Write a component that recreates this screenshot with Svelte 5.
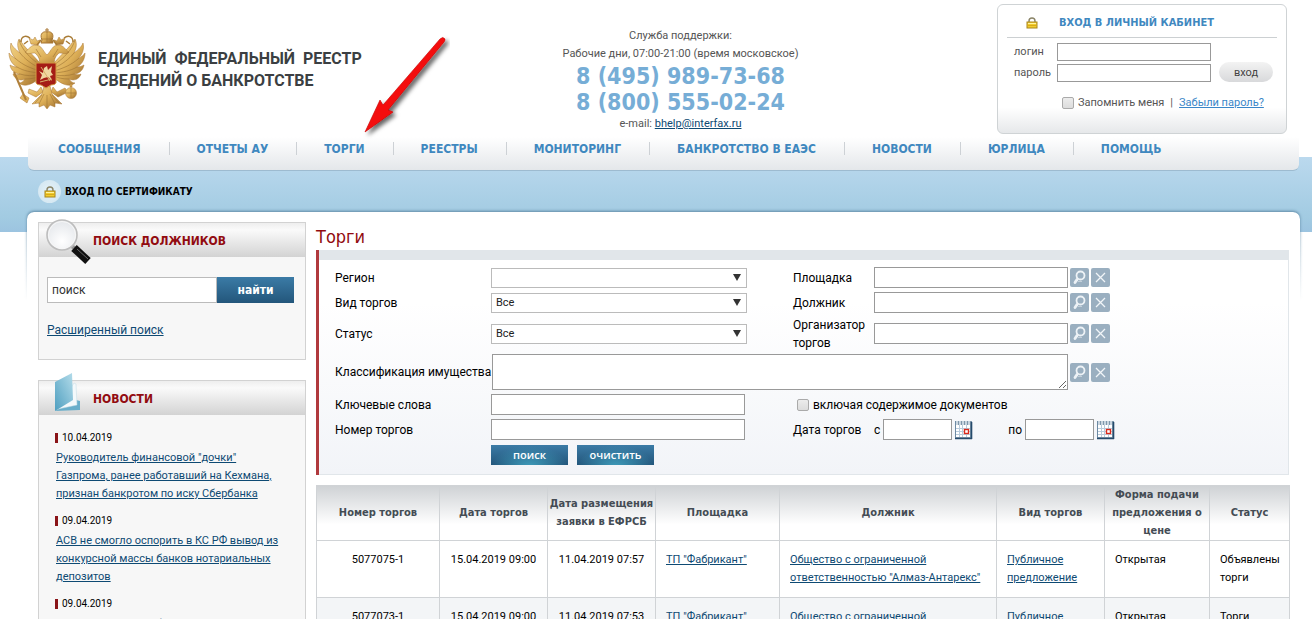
<script lang="ts">
  type Trade = {
    number: string;
    date: string;
    published: string;
    platform: string;
    debtor: string;
    kind: string;
    form: string;
    status: string;
  };

  const menu = [
    'СООБЩЕНИЯ', 'ОТЧЕТЫ АУ', 'ТОРГИ', 'РЕЕСТРЫ', 'МОНИТОРИНГ',
    'БАНКРОТСТВО В ЕАЭС', 'НОВОСТИ', 'ЮРЛИЦА', 'ПОМОЩЬ'
  ];

  const news = [
    { date: '10.04.2019', title: 'Руководитель финансовой "дочки" Газпрома, ранее работавший на Кехмана, признан банкротом по иску Сбербанка' },
    { date: '09.04.2019', title: 'АСВ не смогло оспорить в КС РФ вывод из конкурсной массы банков нотариальных депозитов' },
    { date: '09.04.2019', title: 'Реестр должников банка' }
  ];

  const trades: Trade[] = [
    {
      number: '5077075-1', date: '15.04.2019 09:00', published: '11.04.2019 07:57', platform: 'ТП "Фабрикант"',
      debtor: 'Общество с ограниченной ответственностью "Алмаз-Антарекс"', kind: 'Публичное предложение',
      form: 'Открытая', status: 'Объявлены торги'
    },
    {
      number: '5077073-1', date: '15.04.2019 09:00', published: '11.04.2019 07:53', platform: 'ТП "Фабрикант"',
      debtor: 'Общество с ограниченной ответственностью "Алмаз-Антарекс"', kind: 'Публичное предложение',
      form: 'Открытая', status: 'Торги объявлены'
    }
  ];

  let query = $state('поиск');
  let remember = $state(false);
  let withDocs = $state(false);
</script>

{#snippet lock()}
  <svg class="lock" viewBox="0 0 12 12" aria-hidden="true">
    <path d="M3 6V4a3 3 0 0 1 6 0V6" fill="none" stroke="#8a8468" stroke-width="1.400" />
    <rect x="1" y="5" width="10" height="6" fill="#f2cd2c" stroke="#a8841c" />
    <path d="M2 6.500h8" stroke="#fff3a0" />
    <path d="M2 8.500h8" stroke="#d9a91a" />
  </svg>
{/snippet}

{#snippet pick(name: string)}
  <span class="tools">
    <button type="button" class="tool" aria-label={`Выбрать: ${name}`}>
      <svg viewBox="0 0 19 19" aria-hidden="true">
        <circle cx="10.500" cy="7.500" r="4" fill="none" stroke="#edf2f6" stroke-width="1.800" />
        <path d="M7 11.500l-2 3" stroke="#edf2f6" stroke-width="2.800" stroke-linecap="round" />
        <path d="M8 13.500h4" stroke="#c3d0da" />
      </svg>
    </button>
    <button type="button" class="tool" aria-label={`Очистить: ${name}`}>
      <svg viewBox="0 0 19 19" aria-hidden="true">
        <path d="M5 5l9 9M14 5l-9 9" stroke="#f1f5f8" stroke-width="1.300" />
      </svg>
    </button>
  </span>
{/snippet}

{#snippet calendar(name: string)}
  <button type="button" class="calendar" aria-label={name}>
    <svg viewBox="0 0 18 20" aria-hidden="true">
      <rect x="0" y="1" width="17" height="18" fill="#7f97ab" />
      <rect x="1" y="5" width="14" height="12" fill="#fff" />
      <path d="M2 1v4M5 1v4M8 1v4M11 1v4M14 1v4" stroke="#e9f0f5" stroke-width="1.400" />
      <path d="M0.500 1v17" stroke="#6d8aa3" />
      <path d="M1 8.500h14M1 11.500h14M1 14.500h14M4.500 5v12M7.500 5v12M11.500 5v12" stroke="#b9cbdc" />
      <path d="M16.500 2v17M0 18.500h17" stroke="#254a6b" stroke-width="1.600" />
      <rect x="9.500" y="9.500" width="4" height="4" fill="#fff" stroke="#d9291c" stroke-width="1.400" />
    </svg>
  </button>
{/snippet}

<div class="page">
  <header class="top">
    <a class="brand" href="/">
      <svg class="emblem" viewBox="0 0 80 84" aria-hidden="true">
        <defs>
          <linearGradient id="gold" x1="0" y1="0" x2="1" y2="1">
            <stop offset="0" stop-color="#f3d68c" />
            <stop offset="0.500" stop-color="#deb058" />
            <stop offset="1" stop-color="#99692b" />
          </linearGradient>
        </defs>
        <g fill="url(#gold)" stroke="#a87530" stroke-width="0.500">
          <path d="M33 36C26 28 17 20 11 11C8 17 11 23 12 25C7 21 4 18 3 15C1 22 5 28 8 31C5 29 2 27 1 25C1 32 5 37 9 39C6 39 4 38 2 37C3 43 8 46 12 46C9 47 7 47 5 46C7 52 13 53 17 51C15 54 13 55 11 55C17 60 25 56 33 49Z" />
          <path d="M45 36C52 28 61 20 67 11C70 17 67 23 66 25C71 21 74 18 75 15C77 22 73 28 70 31C73 29 76 27 77 25C77 32 73 37 69 39C72 39 74 38 76 37C75 43 70 46 66 46C69 47 71 47 73 46C71 52 65 53 61 51C63 54 65 55 67 55C61 60 53 56 45 49Z" />
          <path d="M31 39C33 31 30 28 27 25C22 25 20 27 17 24C21 22 21 18 27 17C34 17 34 22 39 27C44 22 44 17 51 17C57 18 57 22 61 24C58 27 56 25 51 25C48 28 45 31 47 39Z" />
          <path d="M34 12C31 5 36 3 39 4C42 3 47 5 44 12L45 15H33ZM39 0V4M37 2H41" stroke-width="1" />
          <path d="M23 16L21 10L25 12L27 9L29 13L32 12L30 17ZM55 16L57 10L53 12L51 9L49 13L46 12L48 17Z" />
          <path d="M33 59L29 64L21 61L20 65L28 69L35 64ZM45 59L49 64L57 60L60 64L50 69L43 64Z" />
          <path d="M36 58L34 66L24 76L31 75L31 79L36 77L39 81L42 77L47 79L47 75L54 76L44 66L42 58Z" />
          <circle cx="63" cy="65" r="5.500" />
          <path d="M62 56H64V59H62ZM19 75L12 70L15 66L21 70Z" />
        </g>
        <path d="M6 44L18 72" stroke="#b1803a" stroke-width="2" />
        <g fill="none" stroke="#9c7232" stroke-width="0.600">
          <path d="M12 25C17 31 23 36 32 40M8 31C15 37 22 40 32 43M9 39C16 43 22 44 32 45M12 46C18 48 25 48 32 47M17 51C23 51 28 50 32 48M11 12C14 22 22 30 32 37" />
          <path d="M66 25C61 31 55 36 46 40M70 31C63 37 56 40 46 43M69 39C62 43 56 44 46 45M66 46C60 48 53 48 46 47M61 51C55 51 50 50 46 48M67 12C64 22 56 30 46 37" />
          <path d="M39 67V80M36 66L31 76M42 66L47 76M34 67L27 75M44 67L51 75" />
          <path d="M33 11H45M39 4V14M28 21L33 29M50 21L45 29M58 65H68M63 60V70" />
          <path d="M13 14C13 8 18 7 22 10M20 13L16 16M65 14C65 8 60 7 56 10M58 13L62 16M33 12L29 17M45 12L49 17" stroke="#a97c37" stroke-width="1.500" />
        </g>
        <path d="M28 35H48V55Q47 57 43 57L38 60L33 57Q29 57 28 55Z" fill="#a51d16" stroke="#d39a45" />
        <path d="M32 52L34 47L31 43L35 45L36 40L39 38L40 42L44 38L43 44L45 47L42 48L44 53L40 49L36 50Z" fill="#efd6a0" />
        <path d="M32 54L44 51M33 39L42 53" stroke="#d8b06a" />
      </svg>
      <span class="brand-name">ЕДИНЫЙ&nbsp; ФЕДЕРАЛЬНЫЙ&nbsp; РЕЕСТР<br />СВЕДЕНИЙ О БАНКРОТСТВЕ</span>
    </a>

    <div class="support">
      <div>Служба поддержки:</div>
      <div>Рабочие дни, 07:00-21:00 (время московское)</div>
      <div class="phone">8 (495) 989-73-68</div>
      <div class="phone">8 (800) 555-02-24</div>
      <div>e-mail: <a href="mailto:bhelp@interfax.ru">bhelp@interfax.ru</a></div>
    </div>

    <form class="login">
      <h2>{@render lock()}<span>ВХОД В ЛИЧНЫЙ КАБИНЕТ</span></h2>
      <div class="login-body">
        <div class="login-fields">
          <label for="user">логин</label>
          <input id="user" type="text" />
          <label for="pass">пароль</label>
          <input id="pass" type="password" />
        </div>
        <button type="submit">вход</button>
      </div>
      <div class="login-extra">
        <input id="remember" type="checkbox" bind:checked={remember} />
        <label for="remember">Запомнить меня</label>
        <span>|</span>
        <a href="/forgot">Забыли пароль?</a>
      </div>
    </form>
  </header>

  <nav class="menu">
    <ul>
      {#each menu as item}
        <li><a href="/">{item}</a></li>
      {/each}
    </ul>
  </nav>

  <a class="cert" href="/cert">
    <span class="cert-icon">{@render lock()}</span>
    ВХОД ПО СЕРТИФИКАТУ
  </a>

  <div class="content">
    <aside>
      <section class="box">
        <h2>
          <svg class="glass" viewBox="0 0 48 48" aria-hidden="true">
            <defs>
              <radialGradient id="lens" cx="0.500" cy="0.700" r="0.700">
                <stop offset="0" stop-color="#fff" />
                <stop offset="1" stop-color="#e3e6ea" />
              </radialGradient>
            </defs>
            <path d="M27 28L31 32" stroke="#999" stroke-width="4" />
            <path d="M29 30L43 43" stroke="#111" stroke-width="8" />
            <path d="M32 31L43 41" stroke="#666" stroke-width="1" />
            <circle cx="17" cy="17" r="15" fill="url(#lens)" stroke="#bdbdbd" stroke-width="1.600" />
            <circle cx="17" cy="17" r="13.500" fill="none" stroke="#f7f7f7" />
          </svg>
          ПОИСК ДОЛЖНИКОВ
        </h2>
        <form class="quick">
          <div class="quick-row">
            <input type="text" aria-label="Поиск должников" bind:value={query} />
            <button type="submit">найти</button>
          </div>
          <a href="/search">Расширенный поиск</a>
        </form>
      </section>

      <section class="box">
        <h2>
          <svg class="folder" viewBox="0 0 28 40" aria-hidden="true">
            <defs>
              <linearGradient id="cover" x1="0" y1="1" x2="1" y2="0">
                <stop offset="0" stop-color="#4f9fc0" />
                <stop offset="1" stop-color="#b4dcea" />
              </linearGradient>
            </defs>
            <path d="M1 39L22 28L26 29L26 38Z" fill="#69aeca" />
            <path d="M4 37L20 11L22 12L23 33Z" fill="#f4f9fb" stroke="#c2dbe5" stroke-width="0.500" />
            <path d="M1 10L18 1L19 28L1 39Z" fill="url(#cover)" />
          </svg>
          НОВОСТИ
        </h2>
        <ul class="news">
          {#each news as item}
            <li>
              <time>{item.date}</time>
              <a href="/news">{item.title}</a>
            </li>
          {/each}
        </ul>
      </section>
    </aside>

    <main>
      <h1>Торги</h1>

      <form class="filter">
        <div class="fields">
          <label for="region">Регион</label>
          <div class="cell"><span class="select"><select id="region"><option></option></select></span></div>
          <label for="platform">Площадка</label>
          <div class="cell"><input id="platform" type="text" />{@render pick('площадка')}</div>

          <label for="kind">Вид торгов</label>
          <div class="cell"><span class="select"><select id="kind"><option>Все</option></select></span></div>
          <label for="debtor">Должник</label>
          <div class="cell"><input id="debtor" type="text" />{@render pick('должник')}</div>

          <label for="status">Статус</label>
          <div class="cell"><span class="select"><select id="status"><option>Все</option></select></span></div>
          <label for="organizer">Организатор торгов</label>
          <div class="cell"><input id="organizer" type="text" />{@render pick('организатор')}</div>

          <label for="class" class="nowrap">Классификация имущества</label>
          <div class="cell wide"><textarea id="class"></textarea>{@render pick('классификация')}</div>

          <label for="words">Ключевые слова</label>
          <div class="cell"><input id="words" class="long" type="text" /></div>
          <div class="cell docs">
            <input id="docs" type="checkbox" bind:checked={withDocs} />
            <label for="docs">включая содержимое документов</label>
          </div>

          <label for="number">Номер торгов</label>
          <div class="cell"><input id="number" class="long" type="text" /></div>
          <span>Дата торгов</span>
          <div class="cell dates">
            <label for="from">с</label>
            <input id="from" class="date" type="text" />
            {@render calendar('Дата с')}
            <label for="to" class="to">по</label>
            <input id="to" class="date" type="text" />
            {@render calendar('Дата по')}
          </div>

          <div class="cell actions">
            <button type="submit">поиск</button>
            <button type="reset">очистить</button>
          </div>
        </div>
      </form>

      <table>
        <colgroup>
          <col class="c-number" /><col class="c-date" /><col class="c-date" /><col class="c-platform" />
          <col class="c-debtor" /><col class="c-kind" /><col class="c-form" /><col class="c-status" />
        </colgroup>
        <thead>
          <tr>
            <th>Номер торгов</th>
            <th>Дата торгов</th>
            <th>Дата размещения заявки в ЕФРСБ</th>
            <th>Площадка</th>
            <th>Должник</th>
            <th>Вид торгов</th>
            <th>Форма подачи предложения о цене</th>
            <th>Статус</th>
          </tr>
        </thead>
        <tbody>
          {#each trades as t}
            <tr>
              <td class="mid">{t.number}</td>
              <td class="mid">{t.date}</td>
              <td class="mid">{t.published}</td>
              <td><a href="/platform">{t.platform}</a></td>
              <td><a href="/debtor">{t.debtor}</a></td>
              <td><a href="/trade">{t.kind}</a></td>
              <td>{t.form}</td>
              <td>{t.status}</td>
            </tr>
          {/each}
        </tbody>
      </table>
    </main>
  </div>

  <svg class="arrow" viewBox="0 0 90 104" aria-hidden="true">
    <defs>
      <filter id="drop" x="-20%" y="-20%" width="150%" height="150%">
        <feDropShadow dx="3" dy="3" stdDeviation="2" flood-color="#000" flood-opacity="0.600" />
      </filter>
    </defs>
    <path d="M5 97L20 65L23 70L80 4Q83 1 85 4Q85 6 84 7L28 75L33 77Z" fill="#f40d0d" stroke="#c40000" stroke-width="0.600" filter="url(#drop)" />
  </svg>
</div>

<style>
  :global(body) { background: #fff; }
  .page {
    position: relative;
    font: 11px/18px Roboto, sans-serif;
    color: #000;
    background: linear-gradient(#bbd9ee, #a2cbe2 60px, #9cc4e0) no-repeat 0 157px / 100% 75px;
  }
  input, textarea, select, button { box-sizing: border-box; margin: 0; font-family: inherit; font-size: 11px; }
  button { padding: 0; border: 0; cursor: pointer; }
  a { color: #0e4a73; }
  h1, h2, ul { margin: 0; padding: 0; }
  ul { list-style: none; }
  h1, h2, th, .menu, .cert, .phone, .quick-row button { font-family: "DejaVu Sans Condensed", "DejaVu Sans", sans-serif; }

  .top { display: grid; grid-template-columns: 364px 1fr 290px; height: 137px; padding-right: 25px; }
  .brand { display: flex; align-items: flex-start; gap: 10px; padding: 28px 0 0 8px; text-decoration: none; color: #3b3f42; }
  .emblem { width: 80px; height: 84px; flex: none; }
  .brand-name { padding-top: 20px; font: bold 16px/22px Roboto, sans-serif; white-space: nowrap; }
  .support { padding-top: 27px; text-align: center; color: #555; }
  .phone { font-size: 23px; font-weight: bold; line-height: 26px; color: #76add6; }

  .login {
    box-sizing: border-box;
    height: 130px;
    margin-top: 4px;
    padding: 0 9px;
    border: 1px solid #cfd3d5;
    border-radius: 6px;
    background: linear-gradient(#fff 80%, #e6e8ea);
    color: #555;
  }
  .login h2 { display: flex; align-items: center; gap: 21px; height: 28px; padding: 4px 19px 0; border-bottom: 1px solid #ccd0d2; font-size: 11px; color: #3f88bf; }
  .lock { width: 12px; height: 12px; flex: none; }
  .login-body { display: flex; align-items: flex-end; gap: 8px; padding: 5px 0 0 7px; }
  .login-fields { display: grid; grid-template-columns: 43px 154px; row-gap: 3px; }
  .login-fields input { height: 18px; border: 1px solid #999; }
  .login-body button { width: 54px; height: 20px; border-radius: 10px; background: linear-gradient(#f3f3f3, #d8d9db); color: #444; }
  .login-extra { display: flex; align-items: center; gap: 4px; padding: 12px 0 0 55px; white-space: nowrap; }
  .login-extra span { padding: 0 2px; }
  .login-extra a { color: #3a86c8; }

  .menu { height: 33px; margin: 0 13px 0 28px; border-bottom: 1px solid #9dbbd0; border-radius: 0 0 6px 6px; background: linear-gradient(#fff, #e4e7ea); }
  .menu ul { display: flex; padding-left: 3px; }
  .menu li { padding: 3px 28px 0 27px; }
  .menu li + li { border-left: 1px solid transparent; border-image: linear-gradient(transparent 6px, #cdd1d5 6px, #cdd1d5 17px, transparent 17px) 1; }
  .menu a { font-size: 12px; font-weight: bold; color: #3f88bf; text-decoration: none; white-space: nowrap; }

  .cert { display: flex; align-items: center; gap: 4px; height: 41px; padding-left: 38px; font-size: 10px; font-weight: bold; color: #000; text-decoration: none; }
  .cert-icon { display: grid; place-items: center; width: 23px; height: 23px; border-radius: 50%; background: radial-gradient(#e6f2f8, #cfe4f0); }

  .content {
    position: relative;
    isolation: isolate;
    display: flex;
    gap: 10px;
    margin: 0 12px 0 27px;
    padding: 10px 11px 0;
    border-radius: 7px 7px 0 0;
    background: #fff;
  }
  /* top shadow that fades out down the sides */
  .content::before {
    content: "";
    position: absolute;
    z-index: -1;
    inset: 0 0 auto;
    height: 90px;
    border-radius: 7px 7px 0 0;
    box-shadow: 0 -1px 3px #5f88a5;
    mask-image: linear-gradient(#000 20px, transparent);
    mask-position: -5px -5px;
    mask-size: calc(100% + 10px) 95px;
    mask-repeat: no-repeat;
    mask-clip: no-clip;
  }
  aside { display: flex; flex-direction: column; gap: 20px; width: 268px; flex: none; }
  .box { border: 1px solid #d2d2d2; background: #f7f7f7; }
  .box h2 {
    position: relative;
    height: 34px;
    padding-left: 54px;
    background: linear-gradient(#eee, #fafafa 20%, #d3d3d3);
    font-size: 12px;
    line-height: 36px;
    color: #920b10;
  }
  .glass { position: absolute; left: 6px; top: -5px; width: 48px; height: 48px; }
  .folder { position: absolute; left: 15px; top: -9px; width: 28px; height: 40px; }
  .quick { height: 102px; padding: 20px 11px 0 8px; box-sizing: border-box; }
  .quick-row { display: flex; margin-bottom: 18px; }
  .quick-row input { flex: 1; min-width: 0; height: 26px; padding: 0 4px; border: 1px solid #bbb; font-size: 12px; color: #333; }
  .quick-row button { width: 77px; height: 26px; background: linear-gradient(#3b7ba6, #23567b); font-size: 12px; font-weight: bold; color: #fff; }
  .quick a { font-size: 12px; }
  .news { padding: 14px 20px 0 17px; }
  .news li { margin-bottom: 13px; }
  .news time { display: block; height: 10px; margin: 4px 0 6px -1px; padding-left: 4px; border-left: 3px solid #8a1418; font-size: 10px; line-height: 10px; }
  .news a { display: block; }

  main { flex: 1; min-width: 0; }
  h1 { height: 28px; font-size: 18px; line-height: 29px; font-weight: normal; color: #920b10; }
  .filter { margin-bottom: 10px; border-left: 3px solid #b0393d; }
  .fields {
    display: grid;
    grid-template-columns: 156px 302px 81px 1fr;
    grid-template-rows: 25px 25px 37px 40px 25px 25px 25px;
    align-items: center;
    padding: 5px 0 7px 16px;
    border: solid #e1e6ea;
    border-width: 10px 1px 1px 0;
    background: linear-gradient(#fff 20%, #f2f4f8);
    font-size: 12px;
  }
  .nowrap { white-space: nowrap; }
  .cell { display: flex; align-items: center; }
  .cell input:not([type="checkbox"]) { width: 194px; height: 21px; padding: 0 4px; border: 1px solid #999; background: #fff; }
  .cell .long:not([type="checkbox"]) { width: 254px; }
  .cell .date:not([type="checkbox"]) { width: 69px; }
  .select { position: relative; width: 256px; }
  .select::after { content: ""; position: absolute; right: 6px; top: 6px; border: 4px solid transparent; border-top: 7px solid #333; border-bottom: 0; pointer-events: none; }
  select { display: block; width: 100%; height: 20px; padding: 0 4px; border: 1px solid #bbb; border-radius: 0; background: #fff; appearance: none; color: #222; }
  .wide { grid-column: 2 / -1; }
  textarea { width: 576px; height: 36px; margin-left: 1px; border: 1px solid #999; background: #fff; }
  .tools { display: flex; gap: 2px; margin-left: 2px; }
  .tool { width: 19px; height: 19px; border-radius: 2px; background: #9aafc0; }
  .tool svg { display: block; width: 19px; height: 19px; }
  .docs { grid-column: 3 / -1; gap: 4px; padding-left: 4px; }
  input[type="checkbox"] { appearance: none; width: 12px; height: 12px; border: 1px solid #aaa; border-radius: 2px; background: linear-gradient(#ececec, #dcdcdc); }
  input[type="checkbox"]:checked { background: #3f88bf; }
  .dates { gap: 3px; }
  .dates .to { margin-left: 32px; }
  .calendar { width: 18px; height: 20px; background: none; }
  .calendar svg { display: block; width: 18px; height: 20px; }
  .actions { grid-column: 2 / -1; gap: 9px; }
  .actions button { width: 77px; height: 20px; background: radial-gradient(ellipse at 50% 110%, #3f9dbb, transparent 70%), linear-gradient(#3b7ba6, #23567b); font-family: "Open Sans", sans-serif; font-weight: 600; color: #fff; }

  table { width: 100%; table-layout: fixed; border-collapse: collapse; }
  .c-number { width: 123px; }
  .c-date, .c-kind { width: 108px; }
  .c-platform { width: 124px; }
  .c-debtor { width: 217px; }
  .c-form { width: 105px; }
  .c-status { width: 80px; }
  thead { background: linear-gradient(#cfd2d5, #fff 70%); }
  th { padding: 0; border: 1px solid #d0d3d6; color: #444c54; }
  td { padding: 10px; border: 1px solid #d0d3d6; vertical-align: top; }
  .mid { padding: 10px 0; text-align: center; }
  tbody tr:nth-child(even) { background: #f3f5f7; }

  .arrow { position: absolute; left: 360px; top: 35px; width: 90px; height: 104px; pointer-events: none; }
</style>
